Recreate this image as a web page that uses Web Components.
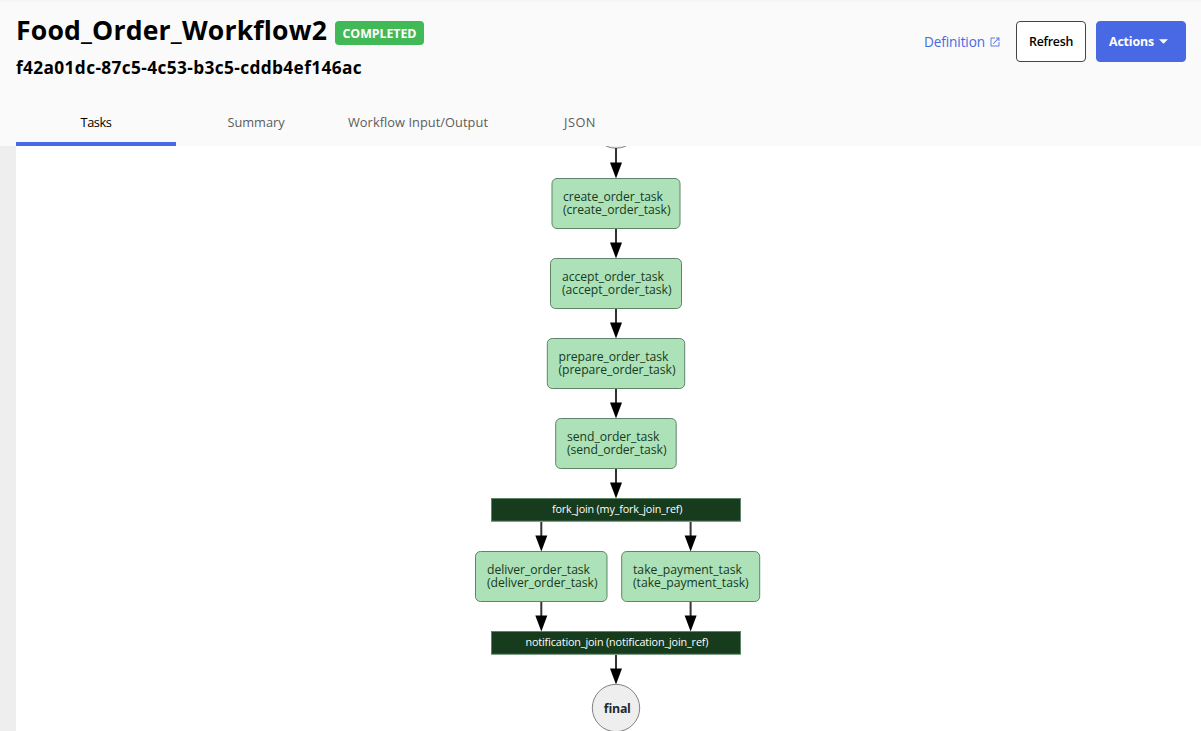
<!DOCTYPE html>
<html lang="en">
<head>
<meta charset="utf-8">
<title>Food_Order_Workflow2</title>
<style>
html,body{margin:0;height:100%;overflow:hidden}
body{font-family:"Open Sans","Noto Sans",sans-serif;color:#000;background:#eee}
</style>
</head>
<body>
<workflow-page></workflow-page>
<script>
const define = (name, html, setup) => customElements.define(name, class extends HTMLElement {
  constructor() {
    super();
    this.attachShadow({ mode: 'open' }).innerHTML = html;
  }
  connectedCallback() { if (setup) setup.call(this, this.shadowRoot); }
});

// A single line of text that spreads its tracking to fill a given width.
define('fit-text', `<style>:host{display:inline-block;white-space:nowrap}span{display:inline-block}</style><span><slot></slot></span>`, function (root) {
  const span = root.querySelector('span');
  const width = +this.getAttribute('width');
  const count = this.textContent.length;
  const delta = (width - span.getBoundingClientRect().width) / count;
  span.style.letterSpacing = delta + 'px';
});

define('status-badge', `<style>
:host{display:flex;align-items:center;justify-content:center;box-sizing:border-box;width:89px;height:24px;border-radius:4px;background:#41b957;color:#fff;font-size:12.4px;font-weight:700}
</style><slot></slot>`);

define('action-button', `<style>
:host{display:flex;align-items:center;justify-content:center;box-sizing:border-box;height:41px;width:70px;border:1px solid #444;border-radius:4px;background:#fff;color:#000;font-size:12.4px;font-weight:600}
:host([primary]){width:90px;padding-right:5px;background:#4969e4;border-color:#4969e4;color:#fff;font-weight:700}
svg{display:none;margin-left:5px}
:host([primary]) svg{display:block}
</style><slot></slot><svg width="9" height="5" viewBox="0 0 9 5"><path d="M0 .3h9L4.5 4.8z" fill="#fff"/></svg>`);

define('definition-link', `<style>
:host{display:flex;align-items:center;color:#4969e4;font-size:13.6px;gap:4px}
svg{display:block;margin-top:1px}
</style><slot></slot><svg width="12" height="12" viewBox="0 0 24 24"><path fill="#4969e4" opacity=".85" d="M19 19H5V5h7V3H5c-1.11 0-2 .9-2 2v14c0 1.1.89 2 2 2h14c1.1 0 2-.9 2-2v-7h-2v7zM14 3v2h3.59l-9.83 9.83 1.41 1.41L19 6.41V10h2V3h-7z"/></svg>`);

define('tab-item', `<style>
:host{display:flex;box-sizing:border-box;align-items:center;justify-content:center;height:48px;min-width:160px;padding:4px 12px 0;color:#5c5c5c;font-size:12.8px;font-weight:500;border-bottom:4px solid transparent}
:host([selected]){color:#000;border-color:#4969e4}
</style><slot></slot>`);

define('page-header', `<style>
:host{display:flex;flex-direction:column;justify-content:space-between;box-sizing:border-box;height:146px;background:linear-gradient(#f5f5f5,#fafafa 3px);padding-left:16px}
.top{display:flex;justify-content:space-between;padding-right:15px}
.title{display:flex;align-items:center;gap:8px;height:36px;padding-top:12px;font-size:26.6px;font-weight:700}
status-badge{margin-top:6px}
.id{font-size:17.3px;font-weight:700;line-height:24px;margin-top:8px}
.actions{display:flex;align-items:center;gap:10px;height:41px;padding-top:21px}
definition-link{margin-right:5px}
.tabs{display:flex}
</style>
<div class="top">
 <div><div class="title"><fit-text width="311">Food_Order_Workflow2</fit-text><status-badge><fit-text width="74">COMPLETED</fit-text></status-badge></div>
 <div class="id"><fit-text width="346">f42a01dc-87c5-4c53-b3c5-cddb4ef146ac</fit-text></div></div>
 <div class="actions"><definition-link><fit-text width="61">Definition</fit-text></definition-link>
 <action-button><fit-text width="44">Refresh</fit-text></action-button>
 <action-button primary><fit-text width="45">Actions</fit-text></action-button></div>
</div>
<div class="tabs">
 <tab-item selected><fit-text width="31">Tasks</fit-text></tab-item>
 <tab-item><fit-text width="57">Summary</fit-text></tab-item>
 <tab-item style="width:164px"><fit-text width="140">Workflow Input/Output</fit-text></tab-item>
 <tab-item><fit-text width="32">JSON</fit-text></tab-item>
</div>`);

define('workflow-graph', `<style>
:host{display:block;background:#fff;overflow:hidden}
svg{display:block;font-family:"Open Sans","Noto Sans",sans-serif}
.task rect{fill:#ade1b8;stroke:#5d8567}
.task text{fill:#173b1d;font-size:12.2px}
.bar rect{fill:#173b1d;stroke:#5d8567}
.bar text{fill:#fff;font-size:10.8px}
.edge line{stroke:#333;stroke-width:2}
.end circle{fill:#eee;stroke:#808080}
.end text{fill:#24292e;font-size:12.4px;font-weight:700}
</style><svg width="1185" height="585" viewBox="16 146 1185 585"></svg>`, function (root) {
  const tasks = [
    ['create_order_task', 552, 178.5, 128, 563, 100, 107.5],
    ['accept_order_task', 550.5, 258.5, 131, 562, 102, 109.5],
    ['prepare_order_task', 547.3, 338.5, 137.4, 558.5, 110, 117],
    ['send_order_task', 555.7, 418.5, 120.5, 567, 92.5, 99.5],
    ['deliver_order_task', 475.5, 551.5, 131.5, 487, 103, 110.5],
    ['take_payment_task', 621.7, 551.5, 138, 633, 109, 115.7]
  ];
  const bars = [
    ['fork_join (my_fork_join_ref)', 498.5, 552, 130.5],
    ['notification_join (notification_join_ref)', 631.5, 525.5, 183]
  ];
  const edges = [[616, 148, 178.5], [616, 229, 258.5], [616, 309, 338.5], [616, 389, 418.5], [616, 469, 498.5],
    [541.3, 522, 551.5], [690.6, 522, 551.5], [541.3, 602, 631.5], [690.6, 602, 631.5], [616, 655, 684.5]];
  const label = (s, x, y, w) => `<text x="${x}" y="${y}" textLength="${w}">${s}</text>`;
  root.querySelector('svg').innerHTML =
    `<g class="end"><circle cx="616" cy="124.5" r="23.7"/><circle cx="616" cy="708" r="23.7"/>${label('final', 603.5, 713, 27)}</g>` +
    edges.map(([x, a, b]) => `<g class="edge"><line x1="${x}" y1="${a}" x2="${x}" y2="${b - 14}"/><path d="M${x - 6} ${b - 16}h12l-6 16z"/></g>`).join('') +
    tasks.map(([s, x, y, w, tx, w1, w2]) => `<g class="task"><rect x="${x}" y="${y}" width="${w}" height="50" rx="5"/>${label(s, tx, y + 22.5, w1)}${label('(' + s + ')', tx, y + 35.5, w2)}</g>`).join('') +
    bars.map(([s, y, x, w]) => `<g class="bar"><rect x="491.5" y="${y}" width="249" height="22.7"/>${label(s, x, y + 14.5, w)}</g>`).join('');
});

define('workflow-page', `<style>
:host{display:flex;flex-direction:column;height:731px;background:#eee}
workflow-graph{flex:1;margin-left:16px}
</style><page-header></page-header><workflow-graph></workflow-graph>`);
</script>
</body>
</html>
